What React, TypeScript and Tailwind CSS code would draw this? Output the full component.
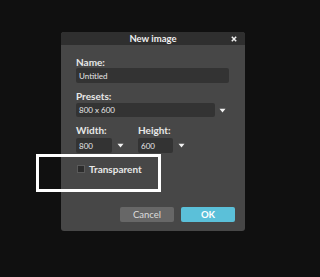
import React from 'react';

const Caret: React.FC = () => (
  <svg width="7" height="5" viewBox="0 0 7 5" className="shrink-0">
    <path d="M0.5 0.8 L6.5 0.8 L3.5 4.4 Z" fill="#f2f2f2" />
  </svg>
);

const Field: React.FC<{ label: string; value: string; w: string }> = ({ label, value, w }) => (
  <div className="flex flex-col">
    <span className="text-[10px] leading-[10px] font-bold text-[#e8e8e8]">{label}</span>
    <div className="mt-[3px] flex items-center gap-[5px]">
      <div className={`${w} h-[15px] bg-[#333333] rounded-[2px] flex items-center pl-[3px] text-[8px] text-[#e6e6e6]`}>
        {value}
      </div>
      <Caret />
    </div>
  </div>
);

const App: React.FC = () => {
  return (
    <div
      className="relative w-[320px] h-[277px] bg-[#101010] overflow-hidden pt-[32px] pl-[61px]"
      style={{ fontFamily: 'Lato, "Open Sans", sans-serif' }}
    >
      <div className="w-[184px] h-[199px] bg-[#474747] rounded-[3px] overflow-hidden flex flex-col">
        <div className="relative h-[13px] bg-[#2f2f2f] flex items-center justify-center">
          <span className="text-[9.5px] font-bold text-[#eeeeee] leading-none">New image</span>
          <svg width="6" height="6" viewBox="0 0 6 6" className="absolute right-[8px] top-[4px]">
            <path d="M0.8 0.8 L5.2 5.2 M5.2 0.8 L0.8 5.2" stroke="#f0f0f0" strokeWidth="1.5" />
          </svg>
        </div>

        <div className="flex flex-col pl-[15px] pr-[16px] pt-[12px]">
          <span className="text-[10px] leading-[10px] font-bold text-[#e8e8e8]">Name:</span>
          <div className="mt-[1px] h-[15px] bg-[#333333] rounded-[2px] flex items-center pl-[3px] text-[8px] text-[#e6e6e6]">
            Untitled
          </div>

          <span className="mt-[8px] text-[10px] leading-[10px] font-bold text-[#e8e8e8]">Presets:</span>
          <div className="mt-[2px] flex items-center gap-[4px]">
            <div className="w-[139px] h-[14px] bg-[#333333] rounded-[2px] flex items-center pl-[3px] text-[8px] text-[#e6e6e6]">
              800 x 600
            </div>
            <Caret />
          </div>

          <div className="mt-[8px] flex gap-[14px]">
            <Field label="Width:" value="800" w="w-[36px]" />
            <Field label="Height:" value="600" w="w-[35px]" />
          </div>

          <div className="mt-[11px] flex items-center gap-[4px] pl-[1px]">
            <div className="w-[8px] h-[8px] bg-[#2c2c2c] border border-[#5a5a5a]" />
            <span className="text-[10px] leading-[10px] font-bold text-[#e8e8e8]">Transparent</span>
          </div>

          <div className="mt-[33px] flex justify-end gap-[7px] pr-[-6px] mr-[-6px]">
            <button className="w-[54px] h-[15px] rounded-[2px] bg-[#676767] text-[9.5px] text-[#dddddd] leading-none">
              Cancel
            </button>
            <button className="w-[54px] h-[15px] rounded-[2px] bg-[#5bc0d9] text-[9.5px] font-bold text-white leading-none">
              OK
            </button>
          </div>
        </div>
      </div>

      <div className="absolute left-[36px] top-[154px] w-[125px] h-[38px] border-[3px] border-white" />
    </div>
  );
};

export default App;
